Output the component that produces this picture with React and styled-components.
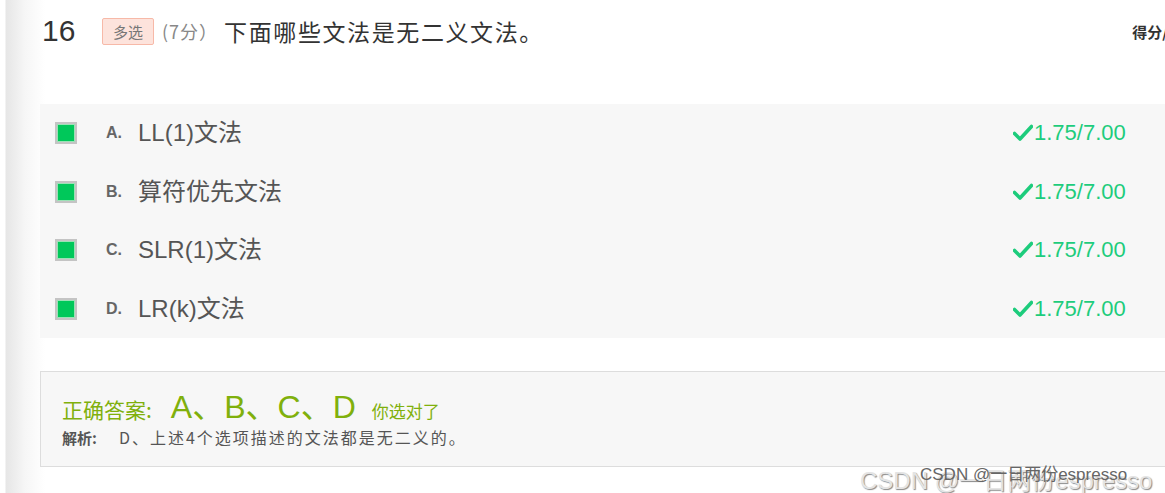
import React from 'react';
import styled, { createGlobalStyle } from 'styled-components';

const Global = createGlobalStyle`
  html, body { margin: 0; padding: 0; background: #fff; }
  body { font-family: "Liberation Sans", "Noto Sans CJK SC", sans-serif; overflow: hidden; }
`;

const Page = styled.div`
  position: relative;
  width: 1165px;
  height: 493px;
  overflow: hidden;
  background: linear-gradient(to right, #fff 0px, #fff 5px, #e6e6e6 6px, #f6f6f6 25px, #fff 45px);
`;

const Inner = styled.div`
  padding: 10px 0 0 40px;
  margin-right: -30px;
`;

const Header = styled.div`
  display: flex;
  align-items: center;
  height: 42px;
  margin-bottom: 52px;
`;

const Num = styled.span`
  font-size: 30px;
  color: #333;
  width: 60px;
  padding-left: 2px;
`;

const Badge = styled.span`
  display: inline-flex;
  align-items: center;
  justify-content: center;
  width: 52px;
  height: 27px;
  background: #fde3dc;
  border: 1px solid #f7b9a8;
  border-radius: 2px;
  color: #777;
  font-size: 15px;
  font-family: "Noto Sans CJK SC", sans-serif;
  box-sizing: border-box;
`;

const Points = styled.span`
  font-size: 18px;
  color: #888;
  margin-left: 8px;
  letter-spacing: 1px;
  font-family: "Noto Sans CJK SC", sans-serif;
`;

const Title = styled.span`
  font-size: 23px;
  letter-spacing: 1.6px;
  color: #333;
  margin-left: 6px;
  font-family: "Noto Sans CJK SC", sans-serif;
  flex: 1;
`;

const Score = styled.span`
  font-size: 15px;
  font-weight: bold;
  color: #333;
  font-family: "Noto Sans CJK SC", sans-serif;
  margin-right: 27px;
`;

const Options = styled.div`
  background: #f7f7f7;
  height: 234px;
  display: flex;
  flex-direction: column;
  justify-content: center;
`;

const Row = styled.div`
  display: flex;
  align-items: center;
  height: 59px;
  padding-left: 15px;
`;

const Check = styled.span`
  width: 22px;
  height: 22px;
  box-sizing: border-box;
  border: 2px solid #c4c4c4;
  background: #00c85a;
  box-shadow: inset 0 0 0 1px #9be2b6;
`;

const Letter = styled.span`
  font-size: 16px;
  font-weight: bold;
  line-height: 1;
  color: #666;
  margin-left: 29px;
  width: 32px;
`;

const OptText = styled.span`
  font-size: 24px;
  line-height: 1;
  color: #555;
  flex: 1;
`;

const Result = styled.span`
  display: inline-flex;
  align-items: center;
  line-height: 1;
  color: #1dcc7c;
  font-size: 22px;
  width: 182px;
  svg { margin-right: 1px; }
`;

const Answer = styled.div`
  margin-top: 33px;
  background: #f7f7f7;
  border: 1px solid #ddd;
  height: 96px;
  padding: 16px 0 0 21px;
  box-sizing: border-box;
`;

const Correct = styled.div`
  display: flex;
  align-items: baseline;
  color: #80b00c;
  font-family: "Noto Sans CJK SC", sans-serif;
  font-size: 21px;
  height: 38px;
  line-height: 38px;
  overflow: visible;
`;

const Big = styled.span`
  font-family: "Liberation Sans", "Noto Sans CJK SC", sans-serif;
  font-size: 32px;
  line-height: 38px;
  margin: 0 16px 0 19px;
`;

const Sep = styled.span`
  font-size: 32px;
  line-height: 38px;
`;

const Small = styled.span`
  font-size: 17px;
`;

const Analysis = styled.div`
  font-size: 16px;
  line-height: 22px;
  letter-spacing: 2px;
  color: #555;
  font-family: "Noto Sans CJK SC", sans-serif;
  margin-top: 0;
  b { font-size: 15px; letter-spacing: 0; color: #555; margin-right: 22px; }
`;

const Mark = styled.span`
  position: absolute;
  white-space: nowrap;
  font-family: "Liberation Sans", "Noto Sans CJK SC", sans-serif;
  left: ${p => p.x}px;
  top: ${p => p.y}px;
  font-size: ${p => p.size}px;
  color: ${p => p.color};
  text-shadow: ${p => p.shadow || 'none'};
`;

const Tick = () => (
  <svg width="20" height="18" viewBox="0 0 20 18">
    <path d="M1.5 9.5 L7 15 L18.5 2.5" fill="none" stroke="#1dcc7c" strokeWidth="3.6" strokeLinecap="round" strokeLinejoin="round" />
  </svg>
);

const opts = [
  ['A.', 'LL(1)文法'],
  ['B.', '算符优先文法'],
  ['C.', 'SLR(1)文法'],
  ['D.', 'LR(k)文法'],
];

export default function App() {
  return (
    <Page>
      <Global />
      <Inner>
        <Header>
          <Num>16</Num>
          <Badge>多选</Badge>
          <Points>(7分）</Points>
          <Title>下面哪些文法是无二义文法。</Title>
          <Score>得分/</Score>
        </Header>
        <Options>
          {opts.map(([l, t]) => (
            <Row key={l}>
              <Check />
              <Letter>{l}</Letter>
              <OptText>{t}</OptText>
              <Result><Tick />1.75/7.00</Result>
            </Row>
          ))}
        </Options>
        <Answer>
          <Correct>
            正确答案:
            <Big>A<Sep>、</Sep>B<Sep>、</Sep>C<Sep>、</Sep>D</Big>
            <Small>你选对了</Small>
          </Correct>
          <Analysis><b>解析:</b>D、上述4个选项描述的文法都是无二义的。</Analysis>
        </Answer>
      </Inner>
      <Mark x={860} y={461} size={24} color="#e4e4e4" shadow="1px 1px 1px #888">CSDN @一日两份espresso</Mark>
      <Mark x={920} y={460} size={17} color="#666">CSDN @一日两份espresso</Mark>
    </Page>
  );
}
